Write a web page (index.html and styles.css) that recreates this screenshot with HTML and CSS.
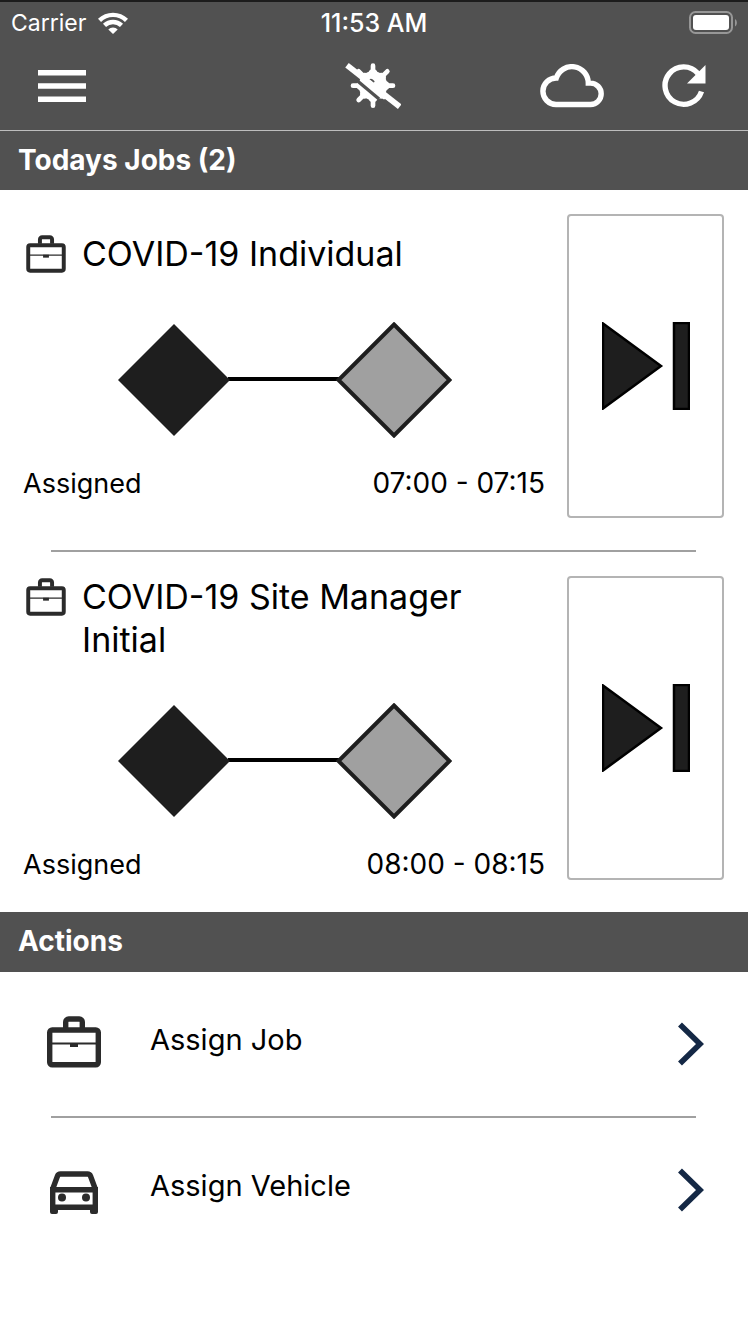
FILE: index.html
```html
<!DOCTYPE html>
<html lang="en">
<head>
<meta charset="utf-8">
<meta name="viewport" content="width=device-width, initial-scale=1">
<title>Todays Jobs</title>
<link rel="stylesheet" href="styles.css">
</head>
<body>
<svg class="defs" aria-hidden="true">
  <symbol id="briefcase" viewBox="0 0 54 52">
    <rect x="2.700" y="14" width="48.600" height="34.800" rx="2.500" fill="none" stroke="currentColor" stroke-width="5.400"/>
    <path d="M18.700 12V6a3 3 0 0 1 3-3h10.600a3 3 0 0 1 3 3V12" fill="none" stroke="currentColor" stroke-width="5.400"/>
    <path d="M4 27.500h46" stroke="currentColor" stroke-width="1.800"/>
    <path d="M23 27h8v4h-8z" fill="currentColor"/>
  </symbol>
  <symbol id="progress" viewBox="-2 0 336 116">
    <path d="M110 57h112" stroke="#000" stroke-width="4"/>
    <path d="M56 2l56 56-56 56L0 58z" fill="#1e1e1e"/>
    <path d="M276 2.500l55.500 55.500-55.500 55.500-55.500-55.500z" fill="#a0a0a0" stroke="#1e1e1e" stroke-width="4"/>
  </symbol>
  <symbol id="next" viewBox="0 0 88 88">
    <path d="M1 1.500L59 44 1 86.500z" fill="#1e1e1e" stroke="#000" stroke-width="2.500"/>
    <path d="M72 1h15v86H72z" fill="#1e1e1e" stroke="#000" stroke-width="2.500"/>
  </symbol>
  <symbol id="chevron" viewBox="0 0 26 44">
    <path d="M2 2.500L22 22 2 41.500" fill="none" stroke="#142845" stroke-width="5.600"/>
  </symbol>
</svg>

<header class="top">
  <div class="status">
    <div class="carrier">
      <span>Carrier</span>
      <svg class="wifi" viewBox="0 0 30 22" aria-hidden="true">
        <g fill="none" stroke="#fff" stroke-width="4.400"><path d="M1.500 8.300a19.500 19.500 0 0 1 27 0"/><path d="M6.500 13.400a12.300 12.300 0 0 1 17 0"/></g>
        <path d="M15 22l-4.700-4.600a6.700 6.700 0 0 1 9.400 0z" fill="#fff"/>
      </svg>
    </div>
    <time class="clock">11:53 AM</time>
    <svg class="battery" viewBox="0 0 48 24" aria-hidden="true">
      <rect x="1" y="1" width="42" height="21" rx="5.500" fill="none" stroke="#979797" stroke-width="2"/>
      <rect x="4" y="4" width="36" height="15" rx="3" fill="#fff"/>
      <path d="M46 8c2.500 1.500 2.500 6 0 7.500z" fill="#979797"/>
    </svg>
  </div>
  <nav class="toolbar">
    <button class="tool" aria-label="Menu"><svg class="menu-icon" viewBox="0 0 48 32"><path d="M0 2.700h48M0 16h48M0 29.300h48" stroke="#fff" stroke-width="5.400"/></svg></button>
    <button class="tool" aria-label="Virus status"><svg class="virus-icon" viewBox="99 190 174 138">
      <circle cx="189" cy="258" r="43" fill="#fff"/>
      <g stroke="#fff" stroke-linecap="round">
        <path d="M189 198v120M129 258h120M146 215l86 86M232 215l-86 86" stroke-width="14"/>
        <path d="M189 222v72M153 258h72M164 233l50 50M214 233l-50 50" stroke-width="28"/>
      </g>
      <path d="M140 242l67 56" stroke="#515151" stroke-width="10"/>
      <path d="M177 240q8-7 17 5l-3 5z" fill="#515151"/>
      <path d="M206 302l22-4 14 12-16 8z" fill="#515151"/>
      <path d="M111 197l158 124" stroke="#fff" stroke-width="17"/>
    </svg></button>
    <div class="tool-group">
      <button class="tool" aria-label="Cloud"><svg class="cloud-icon" viewBox="0 0 64 44"><path d="M16 40.500H50.500a10.700 10.700 0 0 0 0-21.400H48.300V19a16.400 16.400 0 0 0-32-5 13.200 13.200 0 0 0-.3 26.500z" fill="none" stroke="#fff" stroke-width="5.400"/></svg></button>
      <button class="tool" aria-label="Refresh"><svg class="refresh-icon" viewBox="0 0 44 44"><path d="M36 9.500a18.700 18.700 0 1 0 3.500 18" fill="none" stroke="#fff" stroke-width="5.400"/><path d="M43.500 1v18.500H25z" fill="#fff"/></svg></button>
    </div>
  </nav>
</header>

<main>
  <section>
    <h2 class="bar bar-lined">Todays Jobs (2)</h2>
    <article class="job">
      <div class="job-body">
        <div class="job-head">
          <svg class="job-icon" aria-hidden="true"><use href="#briefcase"/></svg>
          <h3 class="job-title">COVID-19 Individual</h3>
        </div>
        <svg class="progress" aria-hidden="true"><use href="#progress"/></svg>
        <div class="job-foot"><span>Assigned</span><span class="job-time">07:00 - 07:15</span></div>
      </div>
      <button class="next" aria-label="Next stage"><svg class="next-icon"><use href="#next"/></svg></button>
    </article>
    <hr class="rule">
    <article class="job">
      <div class="job-body">
        <div class="job-head">
          <svg class="job-icon" aria-hidden="true"><use href="#briefcase"/></svg>
          <h3 class="job-title">COVID-19 Site Manager Initial</h3>
        </div>
        <svg class="progress" aria-hidden="true"><use href="#progress"/></svg>
        <div class="job-foot"><span>Assigned</span><span class="job-time">08:00 - 08:15</span></div>
      </div>
      <button class="next" aria-label="Next stage"><svg class="next-icon"><use href="#next"/></svg></button>
    </article>
  </section>
  <section>
    <h2 class="bar">Actions</h2>
    <a class="action" href="#assign-job">
      <svg class="action-icon" aria-hidden="true"><use href="#briefcase"/></svg>
      <span class="action-label">Assign Job</span>
      <svg class="chevron" aria-hidden="true"><use href="#chevron"/></svg>
    </a>
    <hr class="rule">
    <a class="action" href="#assign-vehicle">
      <svg class="action-icon" viewBox="0 0 54 52" aria-hidden="true">
        <path d="M5.500 27.500L10.500 14q.8-2 3-2h27q2.200 0 3 2l5 13.500" fill="none" stroke="currentColor" stroke-width="5.400"/>
        <path d="M5.700 27.700h42.600v17.600H5.700z" fill="none" stroke="currentColor" stroke-width="5.400"/>
        <path d="M3 44h8v6q0 2-2 2H5q-2 0-2-2zM43 44h8v6q0 2-2 2h-4q-2 0-2-2z" fill="currentColor"/>
        <circle cx="15" cy="35.500" r="4" fill="currentColor"/><circle cx="39" cy="35.500" r="4" fill="currentColor"/>
      </svg>
      <span class="action-label">Assign Vehicle</span>
      <svg class="chevron" aria-hidden="true"><use href="#chevron"/></svg>
    </a>
  </section>
</main>
</body>
</html>
```
FILE: styles.css
```css
* { box-sizing: border-box; }

body {
  margin: 0;
  background: #fff;
  color: #000;
  font-family: Inter, "Liberation Sans", sans-serif;
}

svg { display: block; flex: none; }
button { padding: 0; border: 0; background: none; cursor: pointer; }
h2, h3 { margin: 0; }
.defs { position: absolute; width: 0; height: 0; }

.top {
  background: #515151;
  color: #fff;
  border-top: 2px solid #1c1c1c;
}

.status {
  display: grid;
  grid-template-columns: 1fr auto 1fr;
  align-items: center;
  height: 42px;
  padding: 0 11px;
}
.carrier { display: flex; align-items: center; gap: 12px; font-size: 23px; }
.wifi { width: 30px; height: 22px; }
.clock { font-size: 25px; font-weight: 500; }
.battery { width: 48px; height: 24px; justify-self: end; }

.toolbar {
  display: grid;
  grid-template-columns: 1fr auto 1fr;
  align-items: center;
  height: 86px;
  padding: 0 42px 2px 38px;
}
.tool { justify-self: start; }
.tool-group { display: flex; justify-content: flex-end; gap: 58px; }
.menu-icon { width: 48px; height: 32px; }
.virus-icon { width: 58px; height: 46px; }
.cloud-icon { width: 64px; height: 44px; }
.refresh-icon { width: 44px; height: 44px; }

.bar {
  height: 60px;
  padding: 0 18px;
  background: #515151;
  color: #fff;
  font-size: 28px;
  font-weight: 700;
  line-height: 58px;
}
.bar-lined { border-top: 1px solid #bdbdbd; }

.job {
  display: flex;
  align-items: center;
  gap: 22px;
  padding: 22px 24px 30px 23px;
}
.job-body { flex: 1; display: flex; flex-direction: column; }
.job-head { display: flex; gap: 16px; min-height: 48px; padding: 0 3px; }
.job-icon { width: 40px; height: 38px; margin-top: 3px; color: #2b2b2b; }
.job-title { font-size: 34px; font-weight: 400; line-height: 43px; }
.progress { width: 336px; height: 116px; margin: 42px auto 28px; }
.job-foot {
  display: flex;
  justify-content: space-between;
  align-items: baseline;
  font-size: 27px;
  line-height: 34px;
}
.job-time { font-size: 28px; }

.next {
  display: grid;
  place-items: center;
  flex: none;
  width: 157px;
  height: 304px;
  margin: 2px 0;
  border: 2px solid #b4b4b4;
  border-radius: 4px;
}
.next-icon { width: 88px; height: 88px; }

.rule {
  height: 2px;
  margin: 0 52px 0 51px;
  border: 0;
  background: #a0a0a0;
}

.action {
  display: flex;
  align-items: center;
  height: 144px;
  padding: 0 44px 0 47px;
  color: #000;
  text-decoration: none;
}
.action-icon { width: 54px; height: 52px; margin-bottom: 4px; color: #2b2b2b; }
.action-label { flex: 1; padding: 0 49px 8px; font-size: 29px; line-height: 36px; }
.chevron { width: 26px; height: 44px; }
```
